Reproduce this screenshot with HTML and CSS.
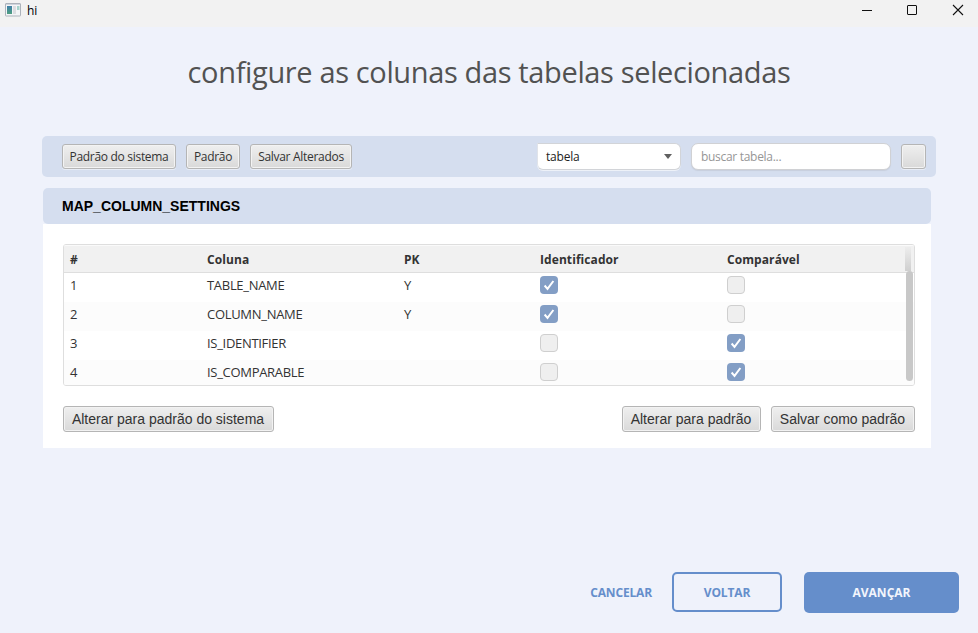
FILE: index.html
```html
<!DOCTYPE html>
<html lang="pt-BR">
<head>
<meta charset="utf-8">
<title>hi</title>
<link rel="stylesheet" href="styles.css">
</head>
<body>
<header class="titlebar">
  <svg class="app-icon" width="16" height="14" viewBox="0 0 16 14"><defs><linearGradient id="g" x1="0" y1="0" x2="0" y2="1"><stop offset="0" stop-color="#3f7fa8"/><stop offset="1" stop-color="#4f9f80"/></linearGradient></defs><rect x=".5" y=".5" width="15" height="12.5" rx=".5" fill="#f4f5f7" stroke="#adb3bb"/><path d="M1 1.5h14" stroke="#cfd4dc"/><rect x="2" y="3" width="5" height="8" fill="url(#g)"/><rect x="8" y="3" width="3" height="8" fill="#dcdde1"/><rect x="12" y="3" width="2.5" height="4" fill="#a5d3cb"/></svg>
  <span class="window-name">hi</span>
  <svg class="controls" width="104" height="14" viewBox="0 0 104 14" fill="none" stroke="#111"><path d="M1 7.5h10"/><rect x="46.5" y="2.5" width="9" height="9" rx=".5"/><path d="M92 2l10 10M102 2L92 12" stroke-width="1.1"/></svg>
</header>
<main class="page">
  <h1>configure as colunas das tabelas selecionadas</h1>
  <section class="toolbar">
    <button class="btn system">Padrão do sistema</button>
    <button class="btn default">Padrão</button>
    <button class="btn changed">Salvar Alterados</button>
    <div class="select"><span>tabela</span><i class="arrow"></i></div>
    <div class="search">buscar tabela...</div>
    <button class="btn blank" aria-label="Buscar"></button>
  </section>
  <section class="card">
    <h2>MAP_COLUMN_SETTINGS</h2>
    <div class="card-body">
      <div class="table">
        <div class="row head"><span>#</span><span>Coluna</span><span>PK</span><span>Identificador</span><span>Comparável</span></div>
        <div class="row"><span>1</span><span class="name">TABLE_NAME</span><span>Y</span><i class="check on"><svg viewBox="0 0 18 18"><path d="M4.6 9.5L7.5 12.8L13.4 5"/></svg></i><i class="check"></i></div>
        <div class="row"><span>2</span><span class="name">COLUMN_NAME</span><span>Y</span><i class="check on"><svg viewBox="0 0 18 18"><path d="M4.6 9.5L7.5 12.8L13.4 5"/></svg></i><i class="check"></i></div>
        <div class="row"><span>3</span><span class="name">IS_IDENTIFIER</span><span></span><i class="check"></i><i class="check on"><svg viewBox="0 0 18 18"><path d="M4.6 9.5L7.5 12.8L13.4 5"/></svg></i></div>
        <div class="row"><span>4</span><span class="name">IS_COMPARABLE</span><span></span><i class="check"></i><i class="check on"><svg viewBox="0 0 18 18"><path d="M4.6 9.5L7.5 12.8L13.4 5"/></svg></i></div>
        <div class="corner"></div>
        <div class="thumb"></div>
      </div>
      <div class="actions">
        <button class="btn large a1">Alterar para padrão do sistema</button>
        <button class="btn large a2">Alterar para padrão</button>
        <button class="btn large a3">Salvar como padrão</button>
      </div>
    </div>
  </section>
  <footer class="nav">
    <a class="cancel">CANCELAR</a>
    <button class="back">VOLTAR</button>
    <button class="next">AVANÇAR</button>
  </footer>
</main>
</body>
</html>
```
FILE: styles.css
```css
* { box-sizing: border-box; }
body { margin: 0; height: 633px; overflow: hidden; background: #eff2fb; color: #333; font: 12px "Open Sans", "Noto Sans", sans-serif; display: flex; flex-direction: column; }
button { font: inherit; padding: 0; white-space: nowrap; }
.titlebar { height: 27px; flex: none; background: #f2f2f2; display: flex; align-items: flex-start; padding: 3px 15px 0 5px; }
.window-name { color: #000; margin-left: 6px; font-size: 12px; line-height: 16px; }
.controls { margin-left: auto; margin-right: -2px; }
.page { flex: 1; display: flex; flex-direction: column; }
h1 { margin: 23px 0 0; height: 44px; line-height: 44px; text-align: center; font-size: 29px; font-weight: 400; color: #525252; letter-spacing: -.36px; white-space: nowrap; }
.toolbar { margin: 42px 42px 0; width: 894px; height: 41px; border-radius: 5px; background: #d5deef; display: flex; align-items: center; padding: 0 10px 0 20px; }
.btn { height: 25px; border: 1px solid #b5b5b5; border-radius: 3px; background: linear-gradient(#efefef, #d9d9d9); box-shadow: inset 0 0 0 1px #f3f3f3, 0 1px #e8edf7; color: #333; text-align: center; letter-spacing: -.3px; }
.system { width: 114px; }
.default { width: 54px; margin-left: 10px; }
.changed { width: 102px; margin-left: 10px; }
.select { margin-left: auto; width: 144px; height: 27px; border: 1px solid #d2d4d8; border-left-color: #e0e3e9; border-radius: 0 6px 6px 6px; background: #fff; display: flex; align-items: center; justify-content: space-between; padding: 0 8px; color: #222; letter-spacing: -.2px; box-shadow: 0 1px #edf1f8; }
.arrow { border: 4px solid transparent; border-top: 5px solid #606060; border-bottom: 0; }
.search { margin-left: 10px; width: 200px; height: 27px; border: 1px solid #d0d1d4; border-radius: 7px; background: #fff; color: #969696; padding-left: 9px; line-height: 25px; letter-spacing: -.3px; box-shadow: 0 1px 1px #c8cfdd; }
.blank { width: 25px; margin: 0 0 0 10px; }
.card { margin: 11px 0 0 43px; width: 888px; height: 260px; background: linear-gradient(#eff2fb 36px, #fff 36px); }
h2 { margin: 0; height: 36px; padding-left: 19px; border-radius: 5px; background: #d5deef; color: #000; font: bold 14px/37px "Liberation Sans", Arial, sans-serif; }
.card-body { padding: 20px 16px 0 20px; }
.table { position: relative; width: 852px; height: 142px; border: 1px solid #dedede; border-radius: 3px; overflow: hidden; }
.row { display: grid; grid-template-columns: 137px 197px 136px 187px 1fr; height: 29px; align-items: center; padding: 0 0 5px 6px; font-size: 13px; background: #fff; }
.row:nth-child(odd) { background: #fcfcfc; }
.row.head { height: 28px; padding: 1px 0 0 6px; background: #f1f1f1; border-top: 1px solid #fafafa; border-bottom: 1px solid #dedede; font-size: 12px; font-weight: 700; letter-spacing: .08px; }
.name { letter-spacing: -.3px; }
.check { width: 18px; height: 18px; border: 1px solid #cfcfcf; border-radius: 4px; background: #efefef; }
.check.on { border: 0; background: #839ec5; }
.check svg { display: block; fill: none; stroke: #fff; stroke-width: 2; }
.corner { position: absolute; right: 3px; top: 2px; width: 6px; height: 24px; background: linear-gradient(#ededed, #cfcfcf); }
.thumb { position: absolute; right: 1px; top: 26px; width: 7px; height: 110px; border-radius: 4px; background: #c8c8c8; }
.actions { display: flex; padding-top: 20px; }
.btn.large { height: 26px; padding-right: 1px; font: 14px "Liberation Sans", Arial, sans-serif; letter-spacing: 0; box-shadow: inset 0 0 0 1px #f2f2f2; }
.a1 { width: 211px; }
.a2 { width: 139px; margin-left: auto; }
.a3 { width: 144px; margin-left: 10px; }
.nav { margin-top: 124px; display: flex; align-items: flex-start; justify-content: flex-end; padding-right: 19px; font-weight: 700; }
.cancel { color: #658ecb; line-height: 41px; margin-right: 20px; letter-spacing: -.15px; }
.back { width: 110px; height: 40px; border: 2px solid #658ecb; border-radius: 5px; background: transparent; color: #658ecb; letter-spacing: -.15px; }
.next { width: 155px; height: 41px; margin-left: 22px; border: 0; border-radius: 5px; background: #658ecb; color: #f2f5fc; }
```
